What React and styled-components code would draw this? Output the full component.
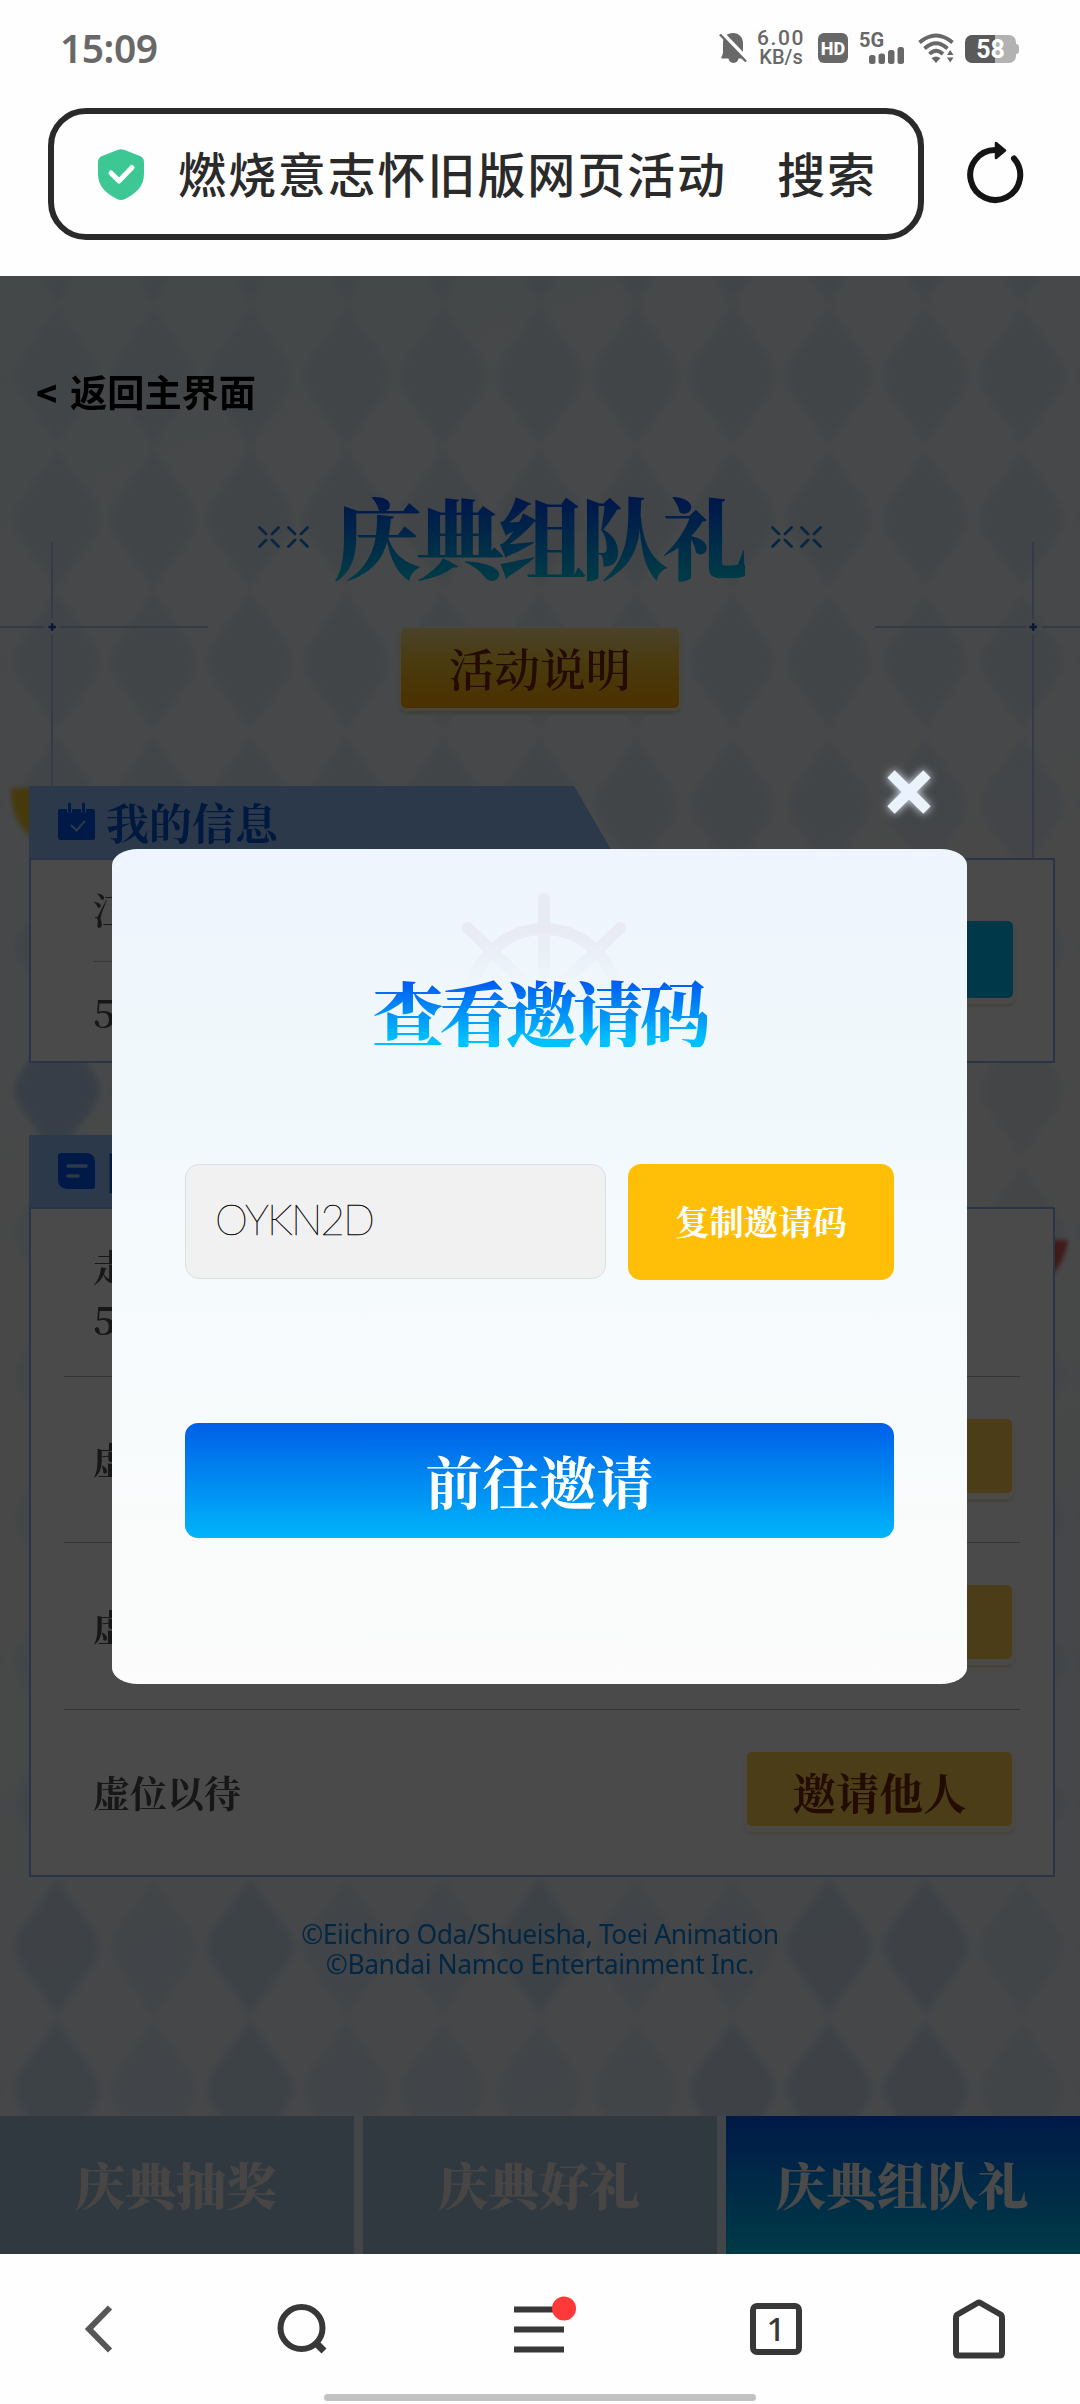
import React from "react";
import styled, { createGlobalStyle } from "styled-components";

const songti = `"Noto Serif CJK SC", "Noto Sans CJK SC", serif`;
const heiti = `"Noto Sans CJK SC", sans-serif`;

const rows = ["虚位以待", "虚位以待", "虚位以待"];

const App = () => {
  return (
    <Screen>
      <GlobalStyle />
      <StatusBar>
        <Clock>15:09</Clock>
        <StatusIcons />
      </StatusBar>
      <AddressBar>
        <AddressBox>
          <ShieldIcon />
          <PageName>燃烧意志怀旧版网页活动</PageName>
          <SearchText>搜索</SearchText>
        </AddressBox>
        <ReloadIcon />
      </AddressBar>
      <WebPage>
        <Backdrop />
        <Content>
          <BackLink>
            <span>&lt;</span>返回主界面
          </BackLink>
          <TitleRow>
            <Crosses />
            <PageTitle>庆典组队礼</PageTitle>
            <Crosses />
          </TitleRow>
          <RuleButton>活动说明</RuleButton>

          <Panel $top={78}>
            <PanelHeader>
              <CalendarIcon />
              我的信息
            </PanelHeader>
            <InfoBody>
              <Info>
                <InfoLine>江</InfoLine>
                <InfoLine>
                  <Digit>5</Digit>
                </InfoLine>
              </Info>
              <SmallButton $color="#00c0ff" $height={77} />
            </InfoBody>
          </Panel>

          <Panel $top={72}>
            <PanelHeader>
              <NoteIcon />
              队伍信息
            </PanelHeader>
            <TeamBody>
              <TeamRow>
                <Member>
                  走<Digit>5</Digit>
                </Member>
              </TeamRow>
              {rows.map((name, i) => (
                <TeamRow key={i}>
                  <Member>{name}</Member>
                  <SmallButton $color="#ffd250">
                    {i === rows.length - 1 && "邀请他人"}
                  </SmallButton>
                </TeamRow>
              ))}
            </TeamBody>
          </Panel>

          <Copyright>
            ©Eiichiro Oda/Shueisha, Toei Animation
            <br />
            ©Bandai Namco Entertainment Inc.
          </Copyright>
          <Tabs>
            <Tab>庆典抽奖</Tab>
            <Tab>庆典好礼</Tab>
            <Tab $active>庆典组队礼</Tab>
          </Tabs>
        </Content>

        <Overlay>
          <Modal>
            <CloseIcon />
            <WheelIcon />
            <ModalTitle>查看邀请码</ModalTitle>
            <CodeRow>
              <CodeBox>OYKN2D</CodeBox>
              <CopyButton>复制邀请码</CopyButton>
            </CodeRow>
            <GoButton>前往邀请</GoButton>
          </Modal>
        </Overlay>
      </WebPage>
      <BottomNav>
        <NavIcons />
        <HomeHandle />
      </BottomNav>
    </Screen>
  );
};

//Icons
const StatusIcons = () => (
  <StatusGroup>
    <svg width="28" height="32" viewBox="0 0 28 32">
      <path d="M14 1c6 0 10 4.500 10 10v10l3 5.500H5L2 26.500l2-5.500V11C4 5 8 1 14 1z" fill="#686868" />
      <path d="M9.500 26h10a5 5 0 0 1-10 0z" fill="#686868" />
      <path d="M2 0 L29 28" stroke="#fefefe" strokeWidth="4" />
      <path d="M1 2.500 L27 29.500" stroke="#686868" strokeWidth="2.500" />
    </svg>
    <NetSpeed>
      <b>6.00</b>
      <span>KB/s</span>
    </NetSpeed>
    <HdBadge>HD</HdBadge>
    <Signal>
      <em>5G</em>
      <svg width="36" height="17" viewBox="0 0 36 17" fill="#686868">
        <rect x="0" y="8" width="6.500" height="9" rx="2.500" />
        <rect x="9.500" y="6.500" width="6.500" height="10.500" rx="2.500" />
        <rect x="19" y="3" width="6.500" height="14" rx="2.500" />
        <rect x="28.500" y="0" width="6.500" height="17" rx="2.500" />
      </svg>
    </Signal>
    <svg width="37" height="31" viewBox="0 0 37 31" fill="none" stroke="#686868" strokeWidth="3.800">
      <path d="M1.500 9.500 Q18 -4.500 34.500 9.500" />
      <path d="M6.500 15.500 Q18 5 29.500 15.500" />
      <path d="M11.500 21 Q18 14.500 25 21" />
      <path d="M13.500 25 Q18 22 22.500 25 L18 30z" fill="#686868" stroke="none" />
      <path d="M29 22 L32.200 17 L35.500 22z M29 24.500 L32.200 29.500 L35.500 24.500z" fill="#686868" stroke="none" />
    </svg>
    <Battery>58</Battery>
  </StatusGroup>
);

const ShieldIcon = () => (
  <svg width="46" height="51" viewBox="0 0 46 51">
    <path
      d="M20 .8q3-1.200 6 0L42 7q4 1.800 4 6v12c0 13-9 20-19 25q-4 1.800-8 0C9 45 0 38 0 25V13q0-4.200 4-6z"
      fill="#3cc795"
    />
    <path d="M13 24 L21 32 L34 18.500" fill="none" stroke="#fff" strokeWidth="5" strokeLinecap="round" strokeLinejoin="round" />
  </svg>
);

const ReloadIcon = () => (
  <svg width="58" height="64" viewBox="0 0 58 64">
    <path d="M29 9 A25 25 0 1 0 48 17.500" fill="none" stroke="#141414" strokeWidth="6" strokeLinecap="round" />
    <path d="M30 2 L39 9.500 L30 17z" fill="#141414" stroke="#141414" strokeWidth="2.500" strokeLinejoin="round" />
  </svg>
);

const Crosses = () => (
  <svg width="51" height="23" viewBox="0 0 51 23" stroke="#1c7fd8" strokeWidth="2.800" strokeLinecap="round">
    {[0, 29].map((x) => (
      <g key={x} transform={`translate(${x} 0)`}>
        <path d="M1.500 1.500 L8 8 M14 14 L20.500 20.500 M20.500 1.500 L14 8 M8 14 L1.500 20.500" />
      </g>
    ))}
  </svg>
);

const CalendarIcon = () => (
  <svg width="37" height="38" viewBox="0 0 37 38">
    <path d="M2 6h7v3q2.500 3 5 0V6h9v3q2.500 3 5 0V6h7q2 0 2 2v27q0 2-2 2H2q-2 0-2-2V8q0-2 2-2z" fill="#0058f0" />
    <path d="M11.500 1v8M25.500 1v8" stroke="#0058f0" strokeWidth="3" strokeLinecap="round" />
    <path d="M13 22l5.500 5.500L27 18" fill="none" stroke="#94c5ff" strokeWidth="2" />
  </svg>
);

const NoteIcon = () => (
  <svg width="37" height="36" viewBox="0 0 37 36">
    <path d="M3 0h26q8 1 8 9v24q0 3-3 3H9q-9-1-9-9V3q0-3 3-3z" fill="#0058f0" />
    <path d="M10 13h18M10 23h10" stroke="#94c5ff" strokeWidth="3.500" strokeLinecap="round" />
  </svg>
);

const diamond = "M0 -69 C12 -44 42 -18 42 0 C42 18 12 44 0 69 C-12 44 -42 18 -42 0 C-42 -18 -12 -44 0 -69z";

//Diamonds that stand out a little more than the rest
const accents = [
  [57, 1946], [250, 1946], [540, 1946], [829, 1946], [926, 1946],
  [57, 2089], [250, 2089], [733, 2089], [829, 2089], [926, 2089],
];

const Backdrop = () => (
  <BackdropSvg width="1080" height="1978" viewBox="0 276 1080 1978">
    <defs>
      <pattern id="diamonds" x="9" y="304.600" width="96.500" height="142.800" patternUnits="userSpaceOnUse">
        <path d={diamond} transform="translate(48 71.400)" fill="#cfe0f2" />
      </pattern>
      <filter id="soft">
        <feGaussianBlur stdDeviation="2" />
      </filter>
      <filter id="softer">
        <feGaussianBlur stdDeviation="3" />
      </filter>
    </defs>
    <rect y="276" width="1080" height="1978" fill="url(#diamonds)" opacity="0.420" filter="url(#softer)" />
    <g fill="#b4d0f4" opacity="0.300" filter="url(#softer)">
      {accents.map(([x, y]) => (
        <path key={`${x}-${y}`} d={diamond} transform={`translate(${x} ${y})`} />
      ))}
    </g>
    <path d={diamond} transform="translate(57 1090)" fill="#9cc6f2" opacity="0.550" filter="url(#softer)" />
    <g stroke="#b4c8f4" strokeWidth="2">
      <path d="M0 627H44M60 627H208M52 542V619M52 635V786" />
      <path d="M875 627H1026M1042 627H1080M1033 542V619M1033 635V858" />
    </g>
    <g stroke="#1a56b8" strokeWidth="2.500">
      <path d="M48.500 627h7.500M52.200 623.200v7.500M1029.500 627h7.500M1033.200 623.200v7.500" />
    </g>
    <path d="M11 788H34V840Q11 822 11 788z" fill="#f0c62c" filter="url(#soft)" />
    <path d="M1050 1240H1068Q1064 1264 1050 1277z" fill="#e05858" filter="url(#soft)" />
  </BackdropSvg>
);

const CloseIcon = () => (
  <CloseSvg width="70" height="70" viewBox="-35 -35 70 70">
    <path d="M-18 -18 L18 18 M18 -18 L-18 18" stroke="#eaf3fd" strokeWidth="10.500" />
  </CloseSvg>
);

const WheelIcon = () => (
  <WheelSvg width="170" height="100" viewBox="0 0 170 100">
    <defs>
      <linearGradient id="fade" x1="0" y1="0" x2="0" y2="1">
        <stop offset="0.500" stopColor="#fff" />
        <stop offset="0.950" stopColor="#fff" stopOpacity="0.200" />
      </linearGradient>
      <mask id="wheelMask">
        <rect width="170" height="92" fill="url(#fade)" />
      </mask>
    </defs>
    <g mask="url(#wheelMask)" fill="none" stroke="#e8ebf4" strokeWidth="12" strokeLinecap="round">
      <circle cx="85" cy="115" r="73" />
      <path d="M85 115V12M85 115L9 41M85 115L161 41" />
    </g>
  </WheelSvg>
);

const NavIcons = () => (
  <NavRow>
    <svg width="32" height="60" viewBox="0 0 32 60" fill="none">
      <path d="M28 8.500 L7 30 L28 51.500" stroke="#575757" strokeWidth="6" />
    </svg>
    <svg width="60" height="60" viewBox="0 0 60 60" fill="none" stroke="#383838" strokeWidth="6">
      <circle cx="27.500" cy="29" r="21" />
      <path d="M41 43 L50 52" strokeWidth="7" />
    </svg>
    <svg width="68" height="60" viewBox="0 0 68 60">
      <path d="M3 10.500H53M3 30.500H53M3 50.500H53" stroke="#383838" strokeWidth="6" />
      <circle cx="53" cy="9.500" r="12" fill="#ff3838" />
    </svg>
    <TabCount>1</TabCount>
    <svg width="52" height="60" viewBox="0 0 52 60" fill="none">
      <path
        d="M24.500 4 Q26 3 27.500 4 L47.500 15.500 Q49 16.500 49 19 V54 Q49 56.500 46.500 56.500 H5.500 Q3 56.500 3 54 V19 Q3 16.500 4.500 15.500z"
        stroke="#383838"
        strokeWidth="6"
      />
    </svg>
  </NavRow>
);

const GlobalStyle = createGlobalStyle`
* {
  margin: 0;
  padding: 0;
  box-sizing: border-box;
}
body {
  background: #fefefe;
  font-family: ${heiti};
}
svg {
  display: block;
  flex-shrink: 0;
  overflow: visible;
}
`;

const Screen = styled.div`
  width: 1080px;
  height: 2404px;
  display: flex;
  flex-direction: column;
  overflow: hidden;
`;

//Browser chrome
const StatusBar = styled.div`
  height: 96px;
  padding: 0 60px 0 60px;
  display: flex;
  justify-content: space-between;
  align-items: center;
  color: #686868;
`;

const Clock = styled.div`
  font: 600 39px/38px "Noto Sans", sans-serif;
  letter-spacing: -0.5px;
`;

const StatusGroup = styled.div`
  display: flex;
  align-items: center;
`;

const NetSpeed = styled.div`
  width: 50px;
  margin: 0 12px 0 9px;
  display: flex;
  flex-direction: column;
  align-items: center;
  font: 500 20px/19px Roboto, sans-serif;
  b {
    font-weight: 500;
    font-size: 21px;
    letter-spacing: 1.600px;
  }
`;

const HdBadge = styled.div`
  width: 30px;
  height: 30px;
  border-radius: 6px;
  background: #686868;
  color: #fff;
  text-align: center;
  font: 800 18px/31px Roboto, sans-serif;
`;

const Signal = styled.div`
  width: 46px;
  height: 31px;
  margin: 0 13px 0 11px;
  display: flex;
  flex-direction: column;
  align-items: flex-end;
  em {
    align-self: flex-start;
    height: 14px;
    font: normal 700 20px/14px Roboto, sans-serif;
  }
`;

const Battery = styled.div`
  width: 51px;
  height: 28px;
  margin: 1px 4px 0 10px;
  border-radius: 7px;
  background: linear-gradient(90deg, #5a5a5a 30px, #b2b2b2 30px);
  color: #fff;
  text-align: center;
  font: 700 25px/29px Roboto, sans-serif;
  position: relative;
  &::after {
    content: "";
    position: absolute;
    right: -3px;
    top: 9px;
    width: 3px;
    height: 10px;
    border-radius: 0 3px 3px 0;
    background: #b2b2b2;
  }
`;

const AddressBar = styled.div`
  height: 180px;
  padding: 12px 0 0 48px;
  display: flex;
  align-items: flex-start;
  > svg {
    margin: 33px 0 0 42px;
  }
`;

const AddressBox = styled.div`
  width: 876px;
  height: 132px;
  padding: 0 41px 0 44px;
  border: 6px solid #2a2a2a;
  border-radius: 38px;
  display: flex;
  align-items: center;
  color: #2a2a2a;
  font-size: 48px;
  font-weight: 500;
  line-height: 60px;
  letter-spacing: 1.9px;
`;

const PageName = styled.div`
  margin: 0 0 4px 34px;
`;

const SearchText = styled.div`
  margin: 0 0 4px auto;
`;

//Activity page
const WebPage = styled.div`
  height: 1978px;
  position: relative;
  background: linear-gradient(160deg, #edf6fa 0%, #f1f8fc 25%, #faf9f7 50%, #edf4fa 75%, #f2f5f7 100%);
`;

const BackdropSvg = styled.svg`
  position: absolute;
  inset: 0;
  overflow: hidden;
`;

const Content = styled.div`
  height: 100%;
  position: relative;
  display: flex;
  flex-direction: column;
`;

const BackLink = styled.div`
  margin: 97px 0 0 36px;
  display: flex;
  color: #000;
  font-size: 37.2px;
  font-weight: 700;
  line-height: 37px;
  span {
    width: 34px;
    font-size: 35px;
    font-weight: 900;
  }
`;

const TitleRow = styled.div`
  height: 100px;
  margin-top: 77px;
  padding: 0 258px 0 258px;
  display: flex;
  align-items: center;
  justify-content: space-between;
`;

const PageTitle = styled.h1`
  margin: 0 2px 7px 0;
  font-family: ${songti};
  font-size: 88px;
  font-weight: 900;
  line-height: 100px;
  letter-spacing: -5.800px;
  color: transparent;
  background: linear-gradient(#0050ff 15%, #00c8f4 92%);
  background-clip: text;
`;

const RuleButton = styled.div`
  width: 278px;
  height: 80px;
  margin-top: 41px;
  align-self: center;
  border-radius: 5px;
  background: linear-gradient(#ffe694, #ffc830 45%, #ffa800);
  box-shadow: 0 1px 0 2px #fff4d0, 0 4px 3px 2px #d8dcd0;
  color: #7a2800;
  text-align: center;
  font-family: ${songti};
  font-size: 45.500px;
  font-weight: 600;
  line-height: 79px;
`;

const Panel = styled.div`
  width: 1026px;
  margin: ${({ $top }) => $top}px 0 0 29px;
`;

const PanelHeader = styled.div`
  width: 587px;
  height: 72px;
  padding-left: 29px;
  display: flex;
  align-items: center;
  gap: 11px;
  background: #94c5ff;
  clip-path: polygon(0 0, 545px 0, 100% 100%, 0 100%);
  color: #0858d8;
  font-family: ${songti};
  font-size: 43px;
  font-weight: 700;
  line-height: 70px;
`;

const PanelBody = styled.div`
  border: 2px solid #8fb4f0;
  background: #fff;
  color: #505050;
  font-family: ${songti};
  font-size: 37px;
  font-weight: 600;
`;

const InfoBody = styled(PanelBody)`
  height: 205px;
  padding: 0 40px 0 62px;
  display: flex;
  align-items: center;
  justify-content: space-between;
`;

const Info = styled.div`
  width: 580px;
`;

const InfoLine = styled.div`
  height: 101px;
  line-height: 98px;
  & + & {
    border-top: 1px solid #c0c0c0;
  }
`;

const Digit = styled.span`
  display: block;
  font-size: 39px;
`;

const TeamBody = styled(PanelBody)`
  height: 670px;
  padding: 0 33px;
`;

const TeamRow = styled.div`
  height: 166.500px;
  padding: 0 8px 0 29px;
  display: flex;
  align-items: center;
  justify-content: space-between;
  & + & {
    border-top: 1px solid #b4b4b4;
  }
`;

const Member = styled.div`
  font-weight: 700;
  line-height: 52px;
`;

const SmallButton = styled.div`
  width: 265px;
  height: ${({ $height = 74 }) => $height}px;
  margin-bottom: ${({ $height }) => ($height ? 3 : 7)}px;
  border-radius: 5px;
  background: ${({ $color }) => $color};
  box-shadow: 0 3px 0 3px #fffaf0, 0 6px 3px 3px #ece6d2;
  color: #7a2800;
  text-align: center;
  font-family: ${songti};
  font-size: 43.500px;
  font-weight: 700;
  line-height: 79px;
`;

const Copyright = styled.div`
  margin-top: 42px;
  color: #0c88e8;
  text-align: center;
  font: 400 26.500px/30px "Noto Sans", sans-serif;
  letter-spacing: -0.450px;
`;

const Tabs = styled.div`
  height: 138px;
  margin-top: auto;
  display: grid;
  grid-template-columns: repeat(3, 1fr);
  gap: 9px;
  background: #e8eff8;
`;

const Tab = styled.div`
  padding-right: 2px;
  background: ${({ $active }) => ($active ? "linear-gradient(#0058f4, #00c8f4)" : "#aac4dc")};
  color: ${({ $active }) => ($active ? "#fff" : "#f4f0ee")};
  text-align: center;
  font-family: ${songti};
  font-size: 50.500px;
  font-weight: 900;
  line-height: 134px;
`;

//Invite code dialog
const Overlay = styled.div`
  position: absolute;
  inset: 0;
  padding: 573px 0 0 112px;
  background: rgba(0, 0, 0, 0.71);
`;

const Modal = styled.div`
  width: 855px;
  height: 835px;
  padding: 124px 73px 0 73px;
  position: relative;
  border-radius: 26px / 16px;
  background: linear-gradient(#eef5fe, #f0f8fb 25%, #f5fafd 50%, #f9fbfb 80%, #fbfcfb);
`;

const CloseSvg = styled.svg`
  position: absolute;
  top: -92px;
  left: 762px;
  filter: drop-shadow(0 0 4px #dfe9f5);
`;

const WheelSvg = styled.svg`
  position: absolute;
  top: 38px;
  left: 347px;
`;

const ModalTitle = styled.h2`
  width: max-content;
  margin: 0 auto;
  position: relative;
  color: transparent;
  background: linear-gradient(#0058f0 10%, #00c0ff 90%);
  background-clip: text;
  font-family: ${songti};
  font-size: 71px;
  font-weight: 900;
  line-height: 74px;
  letter-spacing: -4.200px;
`;

const CodeRow = styled.div`
  margin-top: 117px;
  display: flex;
  justify-content: space-between;
`;

const CodeBox = styled.div`
  width: 421px;
  height: 115px;
  padding-left: 29px;
  border: 1px solid #dcdfe0;
  border-radius: 14px;
  background: #f1f1f1;
  color: #000;
  font: 100 42px/109px Lato, sans-serif;
  letter-spacing: -1.800px;
  -webkit-text-stroke: 0.400px #000;
`;

const CopyButton = styled.div`
  width: 266px;
  height: 116px;
  border-radius: 13px;
  background: #ffbf08;
  color: #fff;
  text-align: center;
  font-family: ${songti};
  font-size: 34.300px;
  font-weight: 700;
  line-height: 114px;
`;

const GoButton = styled.div`
  height: 115px;
  margin-top: 143px;
  border-radius: 13px;
  background: linear-gradient(#005fe8, #00b4fa);
  color: #fff;
  text-align: center;
  font-family: ${songti};
  font-size: 57px;
  font-weight: 700;
  line-height: 113px;
`;

//Bottom toolbar
const BottomNav = styled.div`
  height: 150px;
  padding-top: 45px;
  background: #fefefe;
`;

const NavRow = styled.div`
  height: 60px;
  padding: 0 75px 0 82px;
  display: flex;
  align-items: center;
  svg:nth-child(2) {
    margin-left: 160px;
  }
  svg:nth-child(3) {
    margin-left: 177px;
  }
  svg:last-child {
    margin-left: auto;
  }
`;

const TabCount = styled.div`
  width: 52px;
  height: 52px;
  margin-left: 171px;
  border: 6px solid #383838;
  border-radius: 7px;
  color: #383838;
  text-align: center;
  font: 500 33px/40px "Noto Sans", sans-serif;
`;

const HomeHandle = styled.div`
  width: 432px;
  height: 7px;
  margin: 35px auto 0;
  border-radius: 4px;
  background: #c2c2c2;
`;

export default App;
